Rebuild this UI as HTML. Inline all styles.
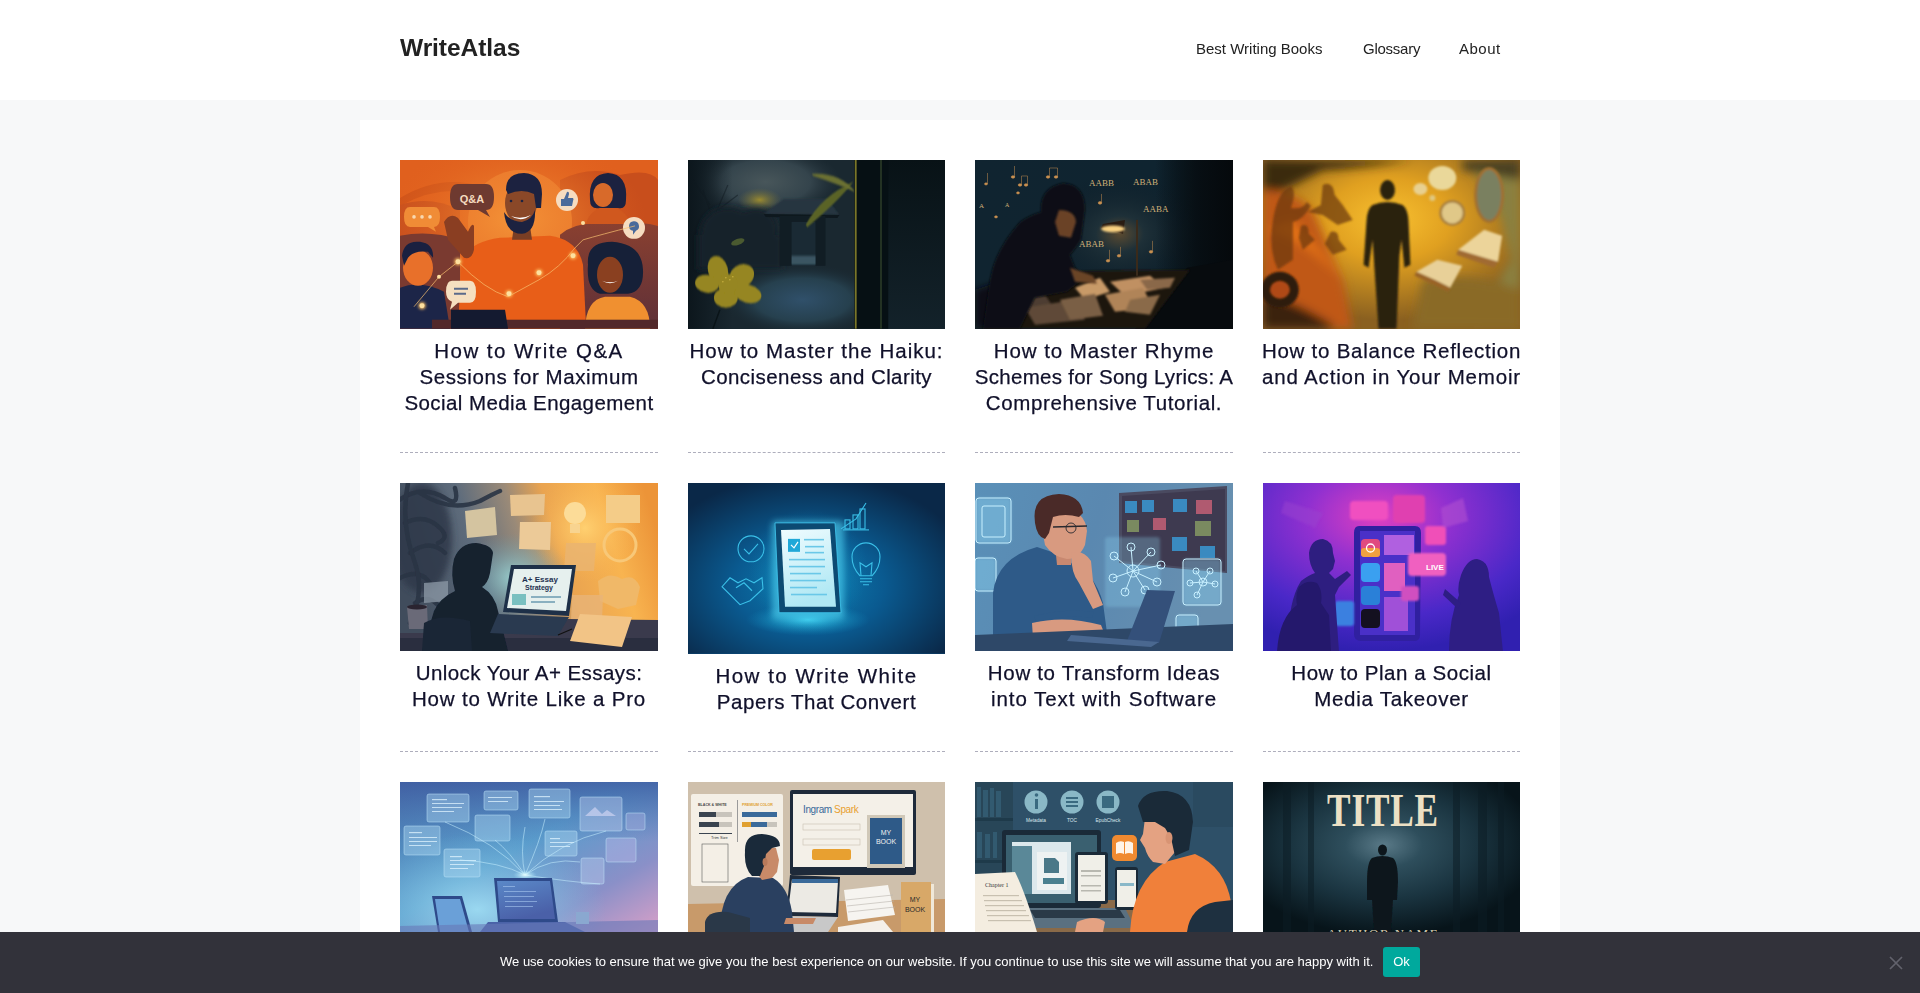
<!DOCTYPE html>
<html><head><meta charset="utf-8">
<style>
*{box-sizing:border-box;margin:0;padding:0}
html,body{width:1920px;height:993px;overflow:hidden}
body{background:#f7f8f9;font-family:"Liberation Sans",sans-serif;color:#222;position:relative;-webkit-font-smoothing:antialiased}
.hdr{position:absolute;left:0;top:0;width:1920px;height:100px;background:#fff}
.logo{will-change:transform;position:absolute;left:400px;top:33.3px;font-size:24.5px;font-weight:bold;color:#222;letter-spacing:-0.05px;line-height:30px}
.nav{will-change:transform;position:absolute;top:40px;font-size:15px;color:#222;line-height:18px;white-space:nowrap}
.wrap{position:absolute;left:360px;top:120px;width:1200px;height:900px;background:#fff}
.card{position:absolute;width:257.5px}
.img{position:absolute;left:0;top:0;width:100%;overflow:hidden}
.img svg{display:block;width:100%;height:100%}
.t{will-change:transform;-webkit-text-stroke:0.25px #10102a;position:absolute;left:-10px;right:-10px;text-align:center;font-size:20.5px;line-height:26px;color:#10102a;white-space:nowrap}
.dash{position:absolute;left:0;width:258px;height:0;border-top:1px dashed #aeaebc}
.cookie{position:absolute;left:0;top:932px;width:1920px;height:61px;background:#32323a}
.ctext{will-change:transform;position:absolute;left:500px;top:22px;font-size:13px;line-height:16px;color:#fff;white-space:nowrap}
.ok{will-change:transform;position:absolute;left:1383px;top:15px;width:37px;height:30px;background:#00a99d;color:#fff;font-size:13px;line-height:30px;text-align:center;border-radius:3px}
.x{position:absolute;left:1889px;top:24px;width:14px;height:14px}
</style></head><body>
<div class="hdr">
  <div class="logo">WriteAtlas</div>
  <div class="nav" style="left:1196px">Best Writing Books</div>
  <div class="nav" style="left:1363px;letter-spacing:-0.25px">Glossary</div>
  <div class="nav" style="left:1459px;letter-spacing:0.5px">About</div>
</div>
<div class="wrap"></div>

<!-- row 1 -->
<div class="card" style="left:400px;width:258px;top:160px">
  <div class="img" id="im1" style="height:168.7px;background:#d9581c"><svg viewBox="0 0 258 169" preserveAspectRatio="none">
<defs>
<radialGradient id="g1a" cx="0.45" cy="0.35" r="0.5"><stop offset="0" stop-color="#f49438"/><stop offset="1" stop-color="#e2621e" stop-opacity="0"/></radialGradient>
<linearGradient id="g1b" x1="0" y1="0" x2="0" y2="1"><stop offset="0" stop-color="#8a4030"/><stop offset="1" stop-color="#5e3038"/></linearGradient>
<filter id="gl1" x="-100%" y="-100%" width="300%" height="300%"><feGaussianBlur stdDeviation="1.5"/></filter>
</defs>
<rect width="258" height="169" fill="#e0601e"/>
<path d="M0 38 Q40 14 80 26 L80 34 Q40 24 0 46Z" fill="#d0541a"/>
<path d="M0 45 Q30 35 60 50 L60 80 L0 80Z" fill="#c8501e"/>
<path d="M160 20 Q190 5 220 15 Q250 8 258 20 L258 80 L160 80Z" fill="#c84e1c"/>
<circle cx="120" cy="62" r="52" fill="#ee8232"/>
<rect width="258" height="169" fill="url(#g1a)"/>
<path d="M0 76 Q30 70 60 80 L60 169 L0 169Z" fill="#7a3a30"/>
<path d="M160 75 Q175 62 200 64 Q235 60 258 66 L258 169 L160 169Z" fill="url(#g1b)"/>

<!-- Q&A bubble -->
<path d="M58 24 H86 Q94 24 94 37 Q94 50 86 50 L90 57 L78 50 H58 Q50 50 50 37 Q50 24 58 24Z" fill="#6e3a30"/>
<text x="72" y="43" font-family="Liberation Sans" font-weight="bold" font-size="11" fill="#f5dcc0" text-anchor="middle">Q&amp;A</text>
<!-- dots bubble -->
<path d="M10 47 H34 Q40 47 40 57 Q40 67 34 67 L36 72 L28 67 H10 Q4 67 4 57 Q4 47 10 47Z" fill="#f08c36"/>
<circle cx="14" cy="57" r="1.8" fill="#f8d8b0"/><circle cx="22" cy="57" r="1.8" fill="#f8d8b0"/><circle cx="30" cy="57" r="1.8" fill="#f8d8b0"/>
<!-- man sweater -->
<path d="M62 100 Q70 82 100 78 L150 76 Q178 80 183 105 L186 165 L58 165Z" fill="#e85e18"/>
<!-- hand -->
<path d="M44 62 Q50 52 58 58 L68 72 Q72 62 74 66 L74 90 Q72 100 64 98 L48 80Z" fill="#8a3e22"/>
<!-- man head -->
<path d="M114 66 L130 66 L132 80 L112 80Z" fill="#7a3e24"/>
<ellipse cx="121" cy="43" rx="16" ry="21" fill="#8a4828"/>
<path d="M106 30 Q106 13 124 13 Q142 14 142 34 L141 48 L136 48 L134 34 Q122 28 108 34Z" fill="#1c2240"/>
<path d="M104 52 Q106 74 122 74 Q136 72 135 50 Q132 60 122 62 Q110 62 104 52Z" fill="#1c2240"/>
<path d="M111 56 Q121 63 131 55 Q121 60 111 56Z" fill="#fff"/>
<circle cx="111" cy="41" r="1.3" fill="#1c2240"/><circle cx="122" cy="41" r="1.3" fill="#1c2240"/>
<!-- boy -->
<path d="M0 128 Q20 120 44 132 L50 169 L0 169Z" fill="#1c2548"/>
<ellipse cx="18" cy="108" rx="15" ry="18" fill="#e8702a"/>
<path d="M2 96 Q4 80 20 82 Q34 84 33 98 L28 92 Q14 90 8 98 L4 106Z" fill="#1a2040"/>
<!-- chat bubble cream -->
<path d="M52 121 H70 Q76 121 76 132 Q76 143 70 143 H58 L50 150 L52 142 Q46 140 46 132 Q46 121 52 121Z" fill="#f5dfc0"/>
<rect x="54" y="128" width="14" height="2" fill="#5a6a8a"/><rect x="54" y="133" width="12" height="2" fill="#5a6a8a"/>
<!-- thumbs circle -->
<circle cx="167" cy="40" r="11" fill="#f6dcc0"/>
<path d="M161 39 L164 39 L167 32 Q169 31 169 34 L168 38 L173 38 Q174 39 173 41 L172 46 L161 46Z" fill="#4a6a9a"/>
<!-- top-right woman -->
<path d="M186 64 Q190 48 208 47 Q226 48 230 64Z" fill="#d0581e"/>
<path d="M190 40 Q188 14 208 13 Q228 14 226 40 Q226 50 218 48 L200 48 Q190 50 190 40Z" fill="#1c2240"/>
<ellipse cx="203" cy="35" rx="10" ry="12" fill="#d86a2a"/>
<!-- chat circle -->
<circle cx="234" cy="68" r="11" fill="#f6dcc0"/>
<path d="M229 66 A5 5 0 1 1 236 71 L233 75 L233 71 A5 5 0 0 1 229 66Z" fill="#4a6a9a"/>
<!-- woman bottom right -->
<path d="M185 169 Q186 140 205 137 L230 137 Q250 142 250 169Z" fill="#f09030"/>
<path d="M188 105 Q186 82 212 82 Q242 84 243 110 Q244 132 228 134 L200 134 Q186 130 188 105Z" fill="#162038"/>
<ellipse cx="210" cy="115" rx="13" ry="18" fill="#8a4020"/>
<path d="M202 121 Q210 126 218 121 Q210 124 202 121Z" fill="#fff"/>
<!-- laptop and desk -->
<rect x="32" y="160" width="226" height="9" fill="#52282a"/>
<path d="M51 150 L105 150 L108 169 L51 169Z" fill="#141a30"/>
<!-- network lines -->
<path d="M14 147 L39 117 L58 102 Q85 130 108 137 L139 120 Q160 108 175 88 L183 80 Q200 75 235 66" stroke="#f8c070" stroke-width="0.7" fill="none"/>
<g filter="url(#gl1)"><circle cx="58" cy="102" r="3.5" fill="#ffc060"/><circle cx="109" cy="134" r="3.5" fill="#ffc060"/><circle cx="139" cy="113" r="3.5" fill="#ffc060"/><circle cx="173" cy="96" r="3.5" fill="#ffc060"/><circle cx="22" cy="146" r="3.5" fill="#ffc060"/></g><circle cx="58" cy="102" r="2.5" fill="#fde0a0"/><circle cx="39" cy="117" r="2" fill="#fde0a0"/><circle cx="22" cy="146" r="2.5" fill="#fde0a0"/>
<circle cx="109" cy="134" r="2.5" fill="#fde0a0"/><circle cx="139" cy="113" r="2.5" fill="#fde0a0"/><circle cx="173" cy="96" r="2.5" fill="#fde0a0"/><circle cx="183" cy="63" r="2" fill="#fde0a0"/>
</svg></div><!--e1-->
  <div class="t" style="top:177.9px"><div style="letter-spacing:1.467px">How to Write Q&amp;A</div><div style="letter-spacing:0.595px">Sessions for Maximum</div><div style="letter-spacing:0.427px">Social Media Engagement</div></div>
</div>
<div class="card" style="left:688px;width:257px;top:160px">
  <div class="img" id="im2" style="height:168.7px;background:#1a2a33"><svg viewBox="0 0 258 169" preserveAspectRatio="none">
<defs>
<radialGradient id="g2sky" cx="0.5" cy="0.5" r="0.5"><stop offset="0" stop-color="#48565a"/><stop offset="0.6" stop-color="#34444c"/><stop offset="1" stop-color="#26343c" stop-opacity="0"/></radialGradient>
<radialGradient id="g2y" cx="0.5" cy="0.5" r="0.5"><stop offset="0" stop-color="#9a8a30"/><stop offset="1" stop-color="#6a6a40" stop-opacity="0"/></radialGradient>
<radialGradient id="g2gr" cx="0.5" cy="0.5" r="0.5"><stop offset="0" stop-color="#30506a"/><stop offset="0.6" stop-color="#26404e"/><stop offset="1" stop-color="#1a2a34" stop-opacity="0"/></radialGradient>
<linearGradient id="g2r" x1="0" y1="0" x2="0" y2="1"><stop offset="0" stop-color="#081216"/><stop offset="1" stop-color="#13222a"/></linearGradient>
<linearGradient id="g2l" x1="0" y1="0" x2="1" y2="0"><stop offset="0" stop-color="#0c161c"/><stop offset="1" stop-color="#0c161c" stop-opacity="0"/></linearGradient>
<filter id="b2" x="-20%" y="-20%" width="140%" height="140%"><feGaussianBlur stdDeviation="3"/></filter>
<filter id="b2s"><feGaussianBlur stdDeviation="0.8"/></filter>
</defs>
<rect width="258" height="169" fill="#1a2830"/>
<ellipse cx="78" cy="22" rx="75" ry="36" fill="url(#g2sky)"/>
<ellipse cx="72" cy="40" rx="22" ry="12" fill="url(#g2y)"/>
<rect x="0" y="0" width="45" height="169" fill="url(#g2l)"/>
<g stroke="#101a20" stroke-width="1.2" fill="none" opacity="0.5"><path d="M20 110 L25 60 L15 30 M25 60 L40 25 M22 45 L5 20 M30 50 L50 35"/></g>
<g fill="#15232b" filter="url(#b2)"><ellipse cx="40" cy="75" rx="28" ry="28"/><ellipse cx="68" cy="70" rx="22" ry="22"/><rect x="10" y="75" width="85" height="35"/></g>
<ellipse cx="115" cy="140" rx="80" ry="36" fill="url(#g2gr)"/>
<path d="M76 54 L96 39 L140 39 L152 55Z" fill="#26363f" filter="url(#b2s)"/><path d="M76 54 L152 55 L150 58 L78 57Z" fill="#0e181e"/>
<rect x="92" y="56" width="46" height="50" fill="#111d24"/>
<rect x="104" y="62" width="24" height="42" fill="#1a2a34"/>
<rect x="104" y="96" width="24" height="9" fill="#3a5462" filter="url(#b2s)"/>
<path d="M118 65 Q135 35 166 22 Q150 42 120 67Z" fill="#5a6428" filter="url(#b2s)"/>
<path d="M124 14 Q152 12 168 32 Q150 24 126 16Z" fill="#6a7030" filter="url(#b2s)"/>
<rect x="200" y="0" width="58" height="169" fill="url(#g2r)"/>
<rect x="167" y="0" width="34" height="169" fill="#061014"/>
<rect x="167.5" y="0" width="1.8" height="169" fill="#7a7628"/>
<rect x="193" y="0" width="1.5" height="169" fill="#2e3e28"/>
<g filter="url(#b2s)" fill="#968620">
<ellipse cx="30" cy="110" rx="10" ry="14" transform="rotate(-15 30 110)"/>
<ellipse cx="54" cy="116" rx="13" ry="11" transform="rotate(-35 54 116)"/>
<ellipse cx="19" cy="124" rx="12" ry="9" transform="rotate(10 19 124)"/>
<ellipse cx="38" cy="138" rx="12" ry="10"/>
<ellipse cx="60" cy="134" rx="14" ry="9" transform="rotate(15 60 134)"/>
<circle cx="40" cy="124" r="10"/>
</g>
<g fill="#c8b040"><circle cx="38" cy="118" r="0.8"/><circle cx="42" cy="120" r="0.8"/><circle cx="35" cy="122" r="0.8"/><circle cx="45" cy="117" r="0.8"/></g>
<path d="M32 150 L25 169" stroke="#0a1418" stroke-width="1.5"/>
<ellipse cx="50" cy="82" rx="7" ry="3" fill="#4a5a30" transform="rotate(-20 50 82)"/>
</svg></div><!--e2-->
  <div class="t" style="top:177.9px"><div style="letter-spacing:1.0px">How to Master the Haiku:</div><div style="letter-spacing:0.436px">Conciseness and Clarity</div></div>
</div>
<div class="card" style="left:975px;width:258px;top:160px">
  <div class="img" id="im3" style="height:168.7px;background:#121c24"><svg viewBox="0 0 258 169" preserveAspectRatio="none">
<defs>
<radialGradient id="g3l" cx="0.53" cy="0.45" r="0.5"><stop offset="0" stop-color="#5a4a30"/><stop offset="0.3" stop-color="#1e3038"/><stop offset="1" stop-color="#0e1c26" stop-opacity="0"/></radialGradient>
<radialGradient id="g3p" cx="0.55" cy="0.2" r="0.7"><stop offset="0" stop-color="#d8a060"/><stop offset="0.5" stop-color="#9a7048"/><stop offset="1" stop-color="#4a3828"/></radialGradient>
<linearGradient id="g3bg" x1="0" y1="0" x2="1" y2="0"><stop offset="0" stop-color="#102430"/><stop offset="0.7" stop-color="#0f2430"/><stop offset="1" stop-color="#070f14"/></linearGradient>
<linearGradient id="g3rr" x1="0" y1="0" x2="1" y2="0"><stop offset="0.7" stop-color="#060c10" stop-opacity="0"/><stop offset="0.88" stop-color="#060c10" stop-opacity="0.85"/><stop offset="1" stop-color="#05090c"/></linearGradient>
<filter id="b3" x="-20%" y="-20%" width="140%" height="140%"><feGaussianBlur stdDeviation="3"/></filter>
<filter id="b3s"><feGaussianBlur stdDeviation="0.8"/></filter>
</defs>
<rect width="258" height="169" fill="url(#g3bg)"/>
<rect x="60" y="20" width="160" height="120" fill="url(#g3l)"/>
<path d="M0 130 L30 120 L20 169 L0 169Z" fill="#0a1014" filter="url(#b3)"/><rect width="258" height="169" fill="url(#g3rr)"/><path d="M160 169 L212 108 L258 100 L258 169Z" fill="#070b0e"/>
<!-- desk -->
<path d="M15 150 L40 112 L215 110 L170 169 L10 169Z" fill="#1e150e" filter="url(#b3s)"/>
<g filter="url(#b3s)">
<path d="M100 128 L125 118 L135 132 L110 140Z" fill="#c89a68"/>
<path d="M135 122 L175 116 L190 128 L150 136Z" fill="#c09062"/>
<path d="M130 135 L168 128 L178 148 L140 152Z" fill="#b08458"/>
<path d="M18 142 L70 135 L80 150 L28 156Z" fill="#4e3e30"/>
<path d="M50 148 L100 140 L110 160 L60 165Z" fill="#5e4a38"/>
<path d="M85 140 L120 134 L128 156 L95 160Z" fill="#7a5e44"/>
<path d="M165 120 L200 118 L195 128 L172 130Z" fill="#8a6848"/>
<path d="M155 140 L185 135 L175 155 L150 152Z" fill="#8a6a48"/>
</g>
<!-- person -->
<path d="M8 169 L15 120 Q20 90 45 62 Q55 55 66 52 Q64 28 88 23 Q110 24 110 50 L106 80 Q100 90 95 95 L100 108 L110 118 L92 132 L60 138 L45 169Z" fill="#0a0e12" filter="url(#b3s)"/>
<path d="M84 50 Q100 50 101 62 L96 78 L84 76 L80 62Z" fill="#6a4226" filter="url(#b3s)"/>
<path d="M95 108 L118 116 L122 124 L100 122Z" fill="#6a4428" filter="url(#b3s)"/>
<!-- lamp -->
<path d="M128 64 L150 60 L148 74 L126 68Z" fill="#2a1c12"/>
<ellipse cx="138" cy="69" rx="12" ry="3.5" fill="#f8d080" filter="url(#b3s)"/>
<rect x="161" y="60" width="2" height="56" fill="#3a2a1a"/>
<!-- text -->
<g font-family="Liberation Serif" fill="#d0b078" font-size="9">
<text x="114" y="26">AABB</text><text x="158" y="25">ABAB</text><text x="168" y="52">AABA</text><text x="104" y="87">ABAB</text>
<text x="4" y="48" font-size="7">A</text><text x="30" y="47" font-size="6">A</text>
</g>
<g fill="#c89050" stroke="#c89050" stroke-width="0.5">
<ellipse cx="38" cy="17" rx="1.8" ry="1.3"/><path d="M39.5 17 V6" fill="none"/>
<ellipse cx="45" cy="25" rx="1.8" ry="1.3"/><ellipse cx="51" cy="25" rx="1.8" ry="1.3"/><path d="M46.5 25 V16 H52.5 V25" fill="none"/>
<ellipse cx="73" cy="17" rx="1.8" ry="1.3"/><ellipse cx="81" cy="17" rx="1.8" ry="1.3"/><path d="M74.5 17 V8 H82.5 V17" fill="none"/>
<ellipse cx="11" cy="24" rx="1.5" ry="1.1"/><path d="M12.5 24 V13" fill="none"/>
<ellipse cx="125" cy="43" rx="1.8" ry="1.3"/><path d="M126.5 43 V34" fill="none"/>
<ellipse cx="133" cy="101" rx="1.8" ry="1.3"/><ellipse cx="144" cy="96" rx="1.8" ry="1.3"/><path d="M134.5 101 V90 M145.5 96 V87" fill="none"/>
<ellipse cx="176" cy="92" rx="1.8" ry="1.3"/><path d="M177.5 92 V81" fill="none"/>
<ellipse cx="21" cy="57" rx="1.5" ry="1.1"/><ellipse cx="43" cy="33" rx="1.5" ry="1.1"/>
</g>
</svg></div><!--e3-->
  <div class="t" style="top:177.9px"><div style="letter-spacing:0.933px">How to Master Rhyme</div><div style="letter-spacing:0.28px">Schemes for Song Lyrics: A</div><div style="letter-spacing:0.614px">Comprehensive Tutorial.</div></div>
</div>
<div class="card" style="left:1263px;width:257px;top:160px">
  <div class="img" id="im4" style="height:168.7px;background:#8a6a20"><svg viewBox="0 0 258 169" preserveAspectRatio="none">
<defs>
<radialGradient id="g4c" cx="0.49" cy="0.35" r="0.6"><stop offset="0" stop-color="#f8c030"/><stop offset="0.4" stop-color="#e0a020"/><stop offset="1" stop-color="#8a6020"/></radialGradient>
<filter id="b4" x="-30%" y="-30%" width="160%" height="160%"><feGaussianBlur stdDeviation="5"/></filter>
<filter id="b4s"><feGaussianBlur stdDeviation="1"/></filter>
</defs>
<rect width="258" height="169" fill="url(#g4c)"/>
<g filter="url(#b4)">
<path d="M0 0 L150 0 Q100 8 60 10 L30 25 L0 40Z" fill="#3a2c10"/>
<path d="M0 30 Q30 30 50 50 L80 120 L90 169 L0 169Z" fill="#c05818"/>
<path d="M205 0 L258 0 L258 169 L215 169 Q235 120 250 100 L240 60Z" fill="#8a8040"/>
<path d="M160 120 Q210 110 258 130 L258 169 L150 169Z" fill="#8a6a28"/>
<path d="M0 135 Q30 140 70 165 L70 169 L0 169Z" fill="#3a2008"/><path d="M5 70 Q40 80 80 120 Q60 90 30 60Z" fill="#e07018"/>
<path d="M200 0 L258 0 L258 20 L200 10Z" fill="#4a4020"/>
</g>
<g filter="url(#b4s)" fill="#6a3810" opacity="0.7">
<path d="M10 60 Q15 30 28 26 Q34 32 28 48 Q40 50 44 42 L48 46 Q40 60 30 62 L30 100 L15 110 Q5 90 10 60Z"/>
<path d="M60 25 Q70 20 72 35 L80 45 L90 60 L75 65 L60 55 L45 52 L58 45Z"/>
<path d="M38 66 Q46 62 46 74 L52 80 L40 90 L36 78Z"/>
<path d="M68 72 Q76 70 76 80 L84 90 L70 95 L62 84Z"/>
</g>
<ellipse cx="17" cy="130" rx="19" ry="18" fill="#2e1c0a" filter="url(#b4s)"/>
<ellipse cx="17" cy="130" rx="10" ry="9" fill="#b04a12" filter="url(#b4s)"/>
<!-- man -->
<g fill="#2a220e" filter="url(#b4s)">
<ellipse cx="125" cy="30" rx="7.5" ry="10"/>
<path d="M110 45 Q125 39 140 45 Q145 48 146 60 L148 105 L142 108 L139 80 L137 96 L134 169 L116 169 L111 96 L110 80 L106 108 L101 105 L104 60 Q105 48 110 45Z"/>
</g>
<!-- thought bubbles -->
<g filter="url(#b4s)">
<ellipse cx="180" cy="18" rx="14" ry="12" fill="#ead89a"/>
<ellipse cx="158" cy="29" rx="7" ry="6" fill="#e8d090"/>
<circle cx="170" cy="38" r="3" fill="#e0c880"/>
<circle cx="190" cy="53" r="13" fill="#a88040"/>
<circle cx="190" cy="53" r="10.5" fill="#e0c888"/>
<ellipse cx="227" cy="35" rx="15" ry="28" fill="#a07030"/>
<ellipse cx="227" cy="35" rx="12" ry="25" fill="#7a8060"/>
<path d="M196 90 L222 70 L240 76 L236 102 L212 98 Z" fill="#ecd49a"/>
<path d="M196 90 L236 102 L232 108 L194 95Z" fill="#a06a30"/>
<path d="M154 112 L175 100 L200 106 L188 128 L172 120Z" fill="#e8d098"/>
<path d="M154 112 L172 120 L188 128 L186 132 L152 116Z" fill="#9a6428"/>
</g>
</svg></div><!--e4-->
  <div class="t" style="top:177.9px"><div style="letter-spacing:0.75px">How to Balance Reflection</div><div style="letter-spacing:0.833px">and Action in Your Memoir</div></div>
</div>

<!-- row 2 -->
<div class="card" style="left:400px;width:258px;top:483px">
  <div class="img" id="im5" style="height:168px;background:#6a6070"><svg viewBox="0 0 258 168" preserveAspectRatio="none">
<defs>
<linearGradient id="g5bg" x1="0" y1="0.5" x2="1" y2="0.3"><stop offset="0" stop-color="#404c5c"/><stop offset="0.3" stop-color="#5e6c7c"/><stop offset="0.48" stop-color="#9a8a78"/><stop offset="0.62" stop-color="#eaa450"/><stop offset="0.82" stop-color="#f8b450"/><stop offset="1" stop-color="#ec9438"/></linearGradient>
<radialGradient id="g5glow" cx="0.5" cy="0.5" r="0.5"><stop offset="0" stop-color="#9ad0d0"/><stop offset="1" stop-color="#6a98a8" stop-opacity="0"/></radialGradient>
<radialGradient id="g5o" cx="0.5" cy="0.5" r="0.5"><stop offset="0" stop-color="#ffd070"/><stop offset="1" stop-color="#f8b050" stop-opacity="0"/></radialGradient>
<filter id="b5" x="-30%" y="-30%" width="160%" height="160%"><feGaussianBlur stdDeviation="3"/></filter>
<filter id="b5s"><feGaussianBlur stdDeviation="0.6"/></filter>
</defs>
<rect width="258" height="168" fill="url(#g5bg)"/>
<rect x="60" y="50" width="110" height="90" fill="url(#g5glow)"/>
<rect x="130" y="-10" width="110" height="110" fill="url(#g5o)"/>
<ellipse cx="22" cy="55" rx="30" ry="55" fill="#2e3848" filter="url(#b5)" opacity="0.85"/>
<g fill="none" stroke="#2a3444" stroke-width="4.5" stroke-linecap="round" filter="url(#b5s)" opacity="0.9">
<path d="M-5 20 Q20 0 45 15 Q60 25 55 5 M20 10 Q50 30 80 18 Q95 10 100 8"/>
<path d="M5 40 Q25 30 40 45 Q50 55 38 60 M10 70 Q30 55 45 70 M0 95 Q20 85 30 100 M15 120 Q30 110 40 125"/>
<path d="M8 0 Q0 40 15 80 Q25 110 10 140"/>
</g>
<!-- notes -->
<g filter="url(#b5s)">
<path d="M65 28 L95 24 L97 52 L67 55Z" fill="#d4c4a0"/>
<path d="M110 12 L145 11 L144 32 L111 33Z" fill="#e8c490"/>
<path d="M120 39 L151 39 L150 67 L119 66Z" fill="#ecca98"/>
<circle cx="175" cy="30" r="11" fill="#fcdc98"/><rect x="170" y="41" width="10" height="9" fill="#f8d490"/>
<path d="M206 12 L240 12 L240 40 L206 40Z" fill="#f4cc88"/>
<circle cx="220" cy="62" r="16" fill="none" stroke="#f8c878" stroke-width="3"/>
<path d="M166 60 L196 60 L194 88 L164 88Z" fill="#eab470" opacity="0.85"/>
<path d="M198 98 Q210 88 222 96 Q234 90 240 104 L236 122 L218 126 L200 118Z" fill="#f0b868"/>
<path d="M172 112 L203 112 L202 138 L171 138Z" fill="#e8b478" opacity="0.8"/>
<path d="M24 100 L48 98 L48 118 L24 120Z" fill="#8a96a4" opacity="0.8"/>
</g>
<!-- desk -->
<path d="M0 150 L100 150 L168 136 L258 137 L258 168 L0 168Z" fill="#3a3a4c"/>
<path d="M0 155 L258 155 L258 168 L0 168Z" fill="#242a3a" opacity="0.7"/>
<path d="M180 131 L232 134 L222 164 L170 158Z" fill="#f2c486"/>
<!-- mug -->
<path d="M7 124 L27 122 L28 146 L9 146Z" fill="#6a6a78"/>
<ellipse cx="17" cy="124" rx="10" ry="2.5" fill="#2a2430"/>
<!-- person -->
<path d="M22 168 L34 128 Q40 115 55 108 Q50 92 54 76 Q60 60 76 60 Q92 62 93 70 L90 90 Q88 100 82 104 Q95 112 98 128 L108 168Z" fill="#14202e" filter="url(#b5s)"/>
<path d="M24 140 Q40 130 70 138 L72 168 L22 168Z" fill="#1a2636"/>
<!-- laptop -->
<path d="M111 82 L176 82 L169 133 L103 129Z" fill="#1e3048"/>
<path d="M114 86 L172 86 L166 128 L107 125Z" fill="#e6f0ee"/>
<text x="140" y="99" font-family="Liberation Sans" font-weight="bold" font-size="8" fill="#1e3050" text-anchor="middle">A+ Essay</text>
<text x="139" y="107" font-family="Liberation Sans" font-weight="bold" font-size="7" fill="#1e3050" text-anchor="middle">Strategy</text>
<rect x="112" y="111" width="14" height="11" fill="#7ac0c0"/>
<rect x="131" y="113" width="30" height="2" fill="#8ab0c0"/><rect x="131" y="118" width="24" height="2" fill="#8ab0c0"/>
<path d="M98 131 L169 134 L158 153 L90 150Z" fill="#2a3a50"/>
<path d="M158 152 L172 146" stroke="#111" stroke-width="1.2"/>
</svg></div><!--e5-->
  <div class="t" style="top:176.9px"><div style="letter-spacing:0.429px">Unlock Your A+ Essays:</div><div style="letter-spacing:0.836px">How to Write Like a Pro</div></div>
</div>
<div class="card" style="left:688px;width:257px;top:483px">
  <div class="img" id="im6" style="height:170.6px;background:#0a4a7a"><svg viewBox="0 0 257 171" preserveAspectRatio="none">
<defs>
<radialGradient id="g6bg" cx="0.47" cy="0.6" r="0.65"><stop offset="0" stop-color="#0c80b4"/><stop offset="0.45" stop-color="#0a5a90"/><stop offset="1" stop-color="#0a2848"/></radialGradient>
<radialGradient id="g6f" cx="0.5" cy="0.5" r="0.5"><stop offset="0" stop-color="#40d0f0"/><stop offset="1" stop-color="#1090c0" stop-opacity="0"/></radialGradient>
<linearGradient id="g6s" x1="0" y1="0" x2="0.3" y2="1"><stop offset="0" stop-color="#f0fcff"/><stop offset="1" stop-color="#b0e8f4"/></linearGradient>
<filter id="b6"><feGaussianBlur stdDeviation="3"/></filter>
</defs>
<rect width="257" height="171" fill="url(#g6bg)"/>
<ellipse cx="120" cy="137" rx="62" ry="16" fill="url(#g6f)"/>
<ellipse cx="120" cy="88" rx="60" ry="62" fill="url(#g6f)" opacity="0.45"/><rect x="84" y="38" width="72" height="98" rx="4" fill="#50d0f0" opacity="0.6" filter="url(#b6)"/>
<path d="M87 40 L147 40 L153 130 L91 130Z" fill="#0c4a72" stroke="#40c8f0" stroke-width="0.8"/>
<path d="M93 47 L142 46 L148 124 L97 124Z" fill="url(#g6s)"/>
<rect x="100" y="56" width="12" height="13" fill="#20a8d8"/>
<path d="M103 62 L106 65 L110 59" stroke="#fff" stroke-width="1.2" fill="none"/>
<g fill="#6ac8e8"><rect x="116" y="56" width="20" height="1.6"/><rect x="117" y="63" width="19" height="1.6"/><rect x="117" y="69" width="19" height="1.6"/>
<rect x="101" y="76" width="36" height="1.6"/><rect x="101" y="83" width="36" height="1.6"/><rect x="102" y="90" width="31" height="1.6"/><rect x="102" y="97" width="36" height="1.6"/><rect x="102" y="104" width="27" height="1.6"/><rect x="103" y="111" width="36" height="1.6"/></g>
<g stroke="#3ac0e8" stroke-width="1.1" fill="none">
<circle cx="63" cy="66" r="13"/><path d="M56 66 L61 71 L70 61"/>
<path d="M34 104 L42 95 L50 100 L58 96 L66 100 L74 95 L75 106 L62 118 L52 122 L44 114Z"/><path d="M48 105 L56 100 L64 108"/>
<path d="M153 46 L168 36 L178 20"/><path d="M155 47 L181 47"/><rect x="157" y="37" width="5" height="9"/><rect x="165" y="32" width="5" height="14"/><rect x="172" y="26" width="5" height="20"/>
<path d="M172 93 Q164 85 164 74 A14 14 0 1 1 192 74 Q192 85 184 93Z"/><path d="M172 96 H184 M172 99 H184 M175 102 H181 M173 93 L172 80 L178 84 L184 80 L183 93"/>
</g>
</svg></div><!--e6-->
  <div class="t" style="top:180.0px"><div style="letter-spacing:1.506px">How to Write White</div><div style="letter-spacing:0.556px">Papers That Convert</div></div>
</div>
<div class="card" style="left:975px;width:258px;top:483px">
  <div class="img" id="im7" style="height:168px;background:#4a7aa0"><svg viewBox="0 0 258 168" preserveAspectRatio="none">
<defs>
<linearGradient id="g7bg" x1="0" y1="0" x2="1" y2="0.2"><stop offset="0" stop-color="#5a90b8"/><stop offset="0.5" stop-color="#5a88b0"/><stop offset="1" stop-color="#6890b0"/></linearGradient>
<filter id="b7"><feGaussianBlur stdDeviation="1.5"/></filter>
</defs>
<rect width="258" height="168" fill="url(#g7bg)"/>
<!-- board -->
<path d="M144 10 L252 3 L252 90 L144 80Z" fill="#4a4a60"/>
<path d="M147 13 L250 6 L250 88 L147 78Z" fill="#3e3a50"/>
<rect x="150" y="18" width="12" height="12" fill="#3a8ac0"/><rect x="167" y="17" width="12" height="12" fill="#3a8ac0"/>
<rect x="198" y="16" width="14" height="13" fill="#3a8ac0"/><rect x="221" y="17" width="16" height="14" fill="#b05a70"/>
<rect x="152" y="37" width="12" height="12" fill="#7a8a60"/><rect x="178" y="35" width="13" height="12" fill="#b05a70"/>
<rect x="220" y="38" width="16" height="15" fill="#7a8a60"/><rect x="197" y="54" width="15" height="14" fill="#3a8ac0"/><rect x="225" y="63" width="15" height="12" fill="#3a8ac0"/>
<!-- holo panels -->
<g filter="url(#b7)">
<rect x="1" y="15" width="35" height="45" rx="3" fill="#8ad0f0" opacity="0.45"/>
<rect x="0" y="75" width="21" height="33" rx="3" fill="#8ad0f0" opacity="0.45"/>
<rect x="130" y="54" width="55" height="70" rx="3" fill="#8ad0f0" opacity="0.3"/>
<rect x="208" y="76" width="38" height="46" rx="3" fill="#8ad0f0" opacity="0.4"/>
<rect x="201" y="132" width="22" height="25" rx="3" fill="#8ad0f0" opacity="0.4"/>
</g>
<g stroke="#c8f0ff" stroke-width="1" fill="none">
<rect x="1" y="15" width="35" height="45" rx="3"/><rect x="0" y="75" width="21" height="33" rx="3"/><rect x="208" y="76" width="38" height="46" rx="3"/><rect x="201" y="132" width="22" height="25" rx="3"/>
<path d="M158 88 L139 73 M158 88 L156 64 M158 88 L176 69 M158 88 L186 82 M158 88 L182 99 M158 88 L170 107 M158 88 L150 109 M158 88 L138 95 M228 99 L221 88 M228 99 L235 88 M228 99 L240 101 M228 99 L215 100 M228 99 L222 112"/>
<rect x="7" y="23" width="23" height="31" rx="2"/>
<circle cx="158" cy="88" r="6"/><circle cx="139" cy="73" r="4"/><circle cx="156" cy="64" r="4"/><circle cx="176" cy="69" r="4"/><circle cx="186" cy="82" r="4"/><circle cx="182" cy="99" r="4"/><circle cx="170" cy="107" r="4"/><circle cx="150" cy="109" r="4"/><circle cx="138" cy="95" r="4"/>
<circle cx="228" cy="99" r="4"/><circle cx="221" cy="88" r="3"/><circle cx="235" cy="88" r="3"/><circle cx="240" cy="101" r="3"/><circle cx="215" cy="100" r="3"/><circle cx="222" cy="112" r="3"/>
</g>
<!-- man -->
<path d="M18 169 L18 110 Q22 75 62 64 L80 70 L96 80 Q120 90 128 120 L132 150 L100 160 L60 169Z" fill="#2e5a88"/>
<path d="M80 62 L96 62 L96 82 L82 82Z" fill="#c88870"/>
<path d="M66 40 Q66 26 86 25 Q110 27 112 48 L110 62 Q104 76 92 76 Q78 74 70 62Z" fill="#d89a80"/>
<path d="M60 40 Q56 12 84 11 Q106 12 108 30 L104 34 Q90 30 78 34 L74 50 L70 56 Q62 54 60 40Z" fill="#4a2a28"/>
<path d="M78 44 L112 43" stroke="#2a2a30" stroke-width="1.3"/>
<circle cx="96" cy="45" r="5" fill="none" stroke="#2a2a30" stroke-width="0.9"/>
<path d="M96 70 Q108 66 116 78 L118 98 L128 122 L118 126 L104 100 Q96 90 96 70Z" fill="#d89a80"/>
<path d="M57 140 Q90 132 126 142 L130 152 L100 156 L58 156Z" fill="#d89a80"/>
<path d="M60 136 Q90 128 118 132" stroke="#2e5a88" stroke-width="6" fill="none"/>
<!-- desk & laptop -->
<path d="M0 152 L258 141 L258 168 L0 168Z" fill="#2e4868"/>
<path d="M172 107 L200 108 L184 160 L152 158Z" fill="#34507a"/>
<path d="M96 152 L184 159 L176 164 L92 158Z" fill="#4a6890"/>
</svg></div><!--e7-->
  <div class="t" style="top:176.9px"><div style="letter-spacing:0.667px">How to Transform Ideas</div><div style="letter-spacing:0.923px">into Text with Software</div></div>
</div>
<div class="card" style="left:1263px;width:257px;top:483px">
  <div class="img" id="im8" style="height:168px;background:#5a20c0"><svg viewBox="0 0 257 168" preserveAspectRatio="none">
<defs>
<radialGradient id="g8bg" cx="0.45" cy="0.2" r="0.8"><stop offset="0" stop-color="#e040c0"/><stop offset="0.35" stop-color="#9030d0"/><stop offset="0.75" stop-color="#4a28c8"/><stop offset="1" stop-color="#3020b0"/></radialGradient>
<filter id="b8"><feGaussianBlur stdDeviation="1"/></filter>
</defs>
<rect width="257" height="168" fill="url(#g8bg)"/>
<!-- phone -->
<path d="M96 43 L152 43 Q158 43 158 50 L157 152 Q157 158 151 158 L98 158 Q91 158 91 151 L91 50 Q91 43 96 43Z" fill="#3020a0"/>
<path d="M97 48 L152 48 L152 152 L97 152Z" fill="#4a30c8"/>
<rect x="98" y="56" width="19" height="18" rx="4" fill="#e04a80"/><rect x="98" y="65" width="19" height="9" rx="3" fill="#f0a040"/><circle cx="107.5" cy="65" r="4" fill="none" stroke="#fff" stroke-width="1.3"/>
<rect x="98" y="80" width="19" height="19" rx="4" fill="#3aa0f0"/>
<rect x="98" y="103" width="19" height="19" rx="4" fill="#2a80d8"/>
<rect x="98" y="126" width="19" height="19" rx="4" fill="#141020"/>
<rect x="121" y="52" width="30" height="20" fill="#b060e0"/>
<rect x="121" y="80" width="21" height="28" fill="#e060c0"/>
<rect x="121" y="114" width="24" height="34" fill="#a050d8"/>
<!-- bubbles -->
<g filter="url(#b8)">
<rect x="87" y="18" width="38" height="19" rx="4" fill="#f050c0"/>
<rect x="130" y="12" width="32" height="28" rx="4" fill="#e040b0"/>
<rect x="162" y="43" width="21" height="19" rx="3" fill="#f050b8"/>
<rect x="145" y="70" width="38" height="23" rx="4" fill="#f060c0"/>
<rect x="138" y="103" width="18" height="15" rx="3" fill="#d050c0"/>
<rect x="72" y="118" width="19" height="25" rx="3" fill="#3a80e0"/>
<path d="M22 18 L60 30 L52 45 L18 30Z" fill="#9a40d0" opacity="0.5"/>
<path d="M178 25 L200 15 L205 38 L180 45Z" fill="#b050d0" opacity="0.6"/>
</g>
<text x="163" y="87" font-family="Liberation Sans" font-weight="bold" font-size="8" fill="#fff">LIVE</text>
<!-- silhouettes -->
<path d="M25 169 Q24 120 38 98 Q46 92 52 90 Q46 82 46 70 Q48 56 60 56 Q70 58 70 70 L72 78 L70 86 L66 90 L72 96 L84 88 L88 92 L76 104 L72 112 L76 169Z" fill="#2e1e80"/>
<path d="M14 169 Q16 135 34 122 Q32 112 36 104 Q44 96 54 100 Q60 108 58 120 L66 132 L68 169Z" fill="#24186c"/>
<path d="M186 169 Q186 135 196 112 Q194 104 198 92 Q204 76 214 76 Q226 78 226 94 Q230 110 236 130 L240 169Z" fill="#2e1e84"/>
<path d="M182 106 L198 120 L195 126 L180 112Z" fill="#2e1e84"/>
</svg></div><!--e8-->
  <div class="t" style="top:176.9px"><div style="letter-spacing:0.563px">How to Plan a Social</div><div style="letter-spacing:0.738px">Media Takeover</div></div>
</div>

<!-- dashes -->
<div class="dash" style="left:400px;width:258px;top:452px"></div>
<div class="dash" style="left:688px;width:257px;top:452px"></div>
<div class="dash" style="left:975px;width:258px;top:452px"></div>
<div class="dash" style="left:1263px;width:257px;top:452px"></div>
<div class="dash" style="left:400px;width:258px;top:751px"></div>
<div class="dash" style="left:688px;width:257px;top:751px"></div>
<div class="dash" style="left:975px;width:258px;top:751px"></div>
<div class="dash" style="left:1263px;width:257px;top:751px"></div>

<!-- row 3 -->
<div class="card" style="left:400px;width:258px;top:782px">
  <div class="img" id="im9" style="height:150px;background:#5a8ac0"><svg viewBox="0 0 258 150" preserveAspectRatio="none">
<defs>
<linearGradient id="g9a" x1="0" y1="0" x2="1" y2="1"><stop offset="0" stop-color="#4a78b0"/><stop offset="0.45" stop-color="#5a9ccc"/><stop offset="0.75" stop-color="#8a90c8"/><stop offset="1" stop-color="#d8a0c8"/></linearGradient>
<linearGradient id="g9t" x1="0" y1="0" x2="0" y2="1"><stop offset="0" stop-color="#3e5aa0" stop-opacity="0.8"/><stop offset="0.4" stop-color="#4a70b0" stop-opacity="0"/></linearGradient>
<radialGradient id="g9g" cx="0.3" cy="0.85" r="0.5"><stop offset="0" stop-color="#9ad8f0"/><stop offset="1" stop-color="#7ac0e0" stop-opacity="0"/></radialGradient>
<radialGradient id="g9s" cx="0.5" cy="0.5" r="0.5"><stop offset="0" stop-color="#e8ffff"/><stop offset="1" stop-color="#a0e0f8" stop-opacity="0"/></radialGradient>
<linearGradient id="g9scr" x1="0" y1="0" x2="0.4" y2="1"><stop offset="0" stop-color="#5a88c8"/><stop offset="1" stop-color="#4a60a8"/></linearGradient>
</defs>
<rect width="258" height="150" fill="url(#g9a)"/>
<rect width="258" height="150" fill="url(#g9t)"/>
<rect width="258" height="150" fill="url(#g9g)"/>
<g fill="#a8d4f0" fill-opacity="0.45" stroke="#c0e4f8" stroke-opacity="0.7" stroke-width="0.7">
<rect x="27" y="12" width="42" height="28" rx="2"/><rect x="84" y="9" width="34" height="19" rx="2"/><rect x="129" y="7" width="41" height="29" rx="2"/>
<rect x="180" y="15" width="42" height="34" rx="2" fill="#b8c8ec"/><rect x="226" y="31" width="19" height="17" rx="2" fill="#a8b0e0"/>
<rect x="4" y="44" width="36" height="29" rx="2"/><rect x="75" y="33" width="35" height="26" rx="2"/><rect x="145" y="49" width="32" height="25" rx="2"/>
<rect x="206" y="56" width="30" height="24" rx="2" fill="#b8b8e8"/><rect x="44" y="67" width="36" height="28" rx="2"/><rect x="181" y="76" width="23" height="26" rx="2" fill="#b8c8ec"/>
</g>
<g fill="#e0f4ff" opacity="0.75">
<rect x="32" y="17" width="15" height="1.2"/><rect x="32" y="21" width="32" height="1"/><rect x="32" y="25" width="30" height="1"/><rect x="32" y="29" width="22" height="1"/>
<rect x="88" y="15" width="24" height="1"/><rect x="88" y="19" width="20" height="1"/>
<rect x="134" y="14" width="16" height="1.2"/><rect x="134" y="19" width="30" height="1"/><rect x="134" y="23" width="26" height="1"/><rect x="134" y="27" width="28" height="1"/>
<rect x="9" y="50" width="13" height="1.2"/><rect x="9" y="55" width="28" height="1"/><rect x="9" y="59" width="28" height="1"/><rect x="9" y="63" width="22" height="1"/>
<rect x="50" y="74" width="12" height="1.2"/><rect x="50" y="78" width="26" height="1"/><rect x="50" y="82" width="24" height="1"/><rect x="50" y="86" width="18" height="1"/>
<rect x="150" y="56" width="10" height="1.2"/><rect x="150" y="60" width="24" height="1"/><rect x="150" y="64" width="20" height="1"/>
<path d="M185 34 L195 25 L202 32 L207 28 L216 34Z" fill="#c8d0f0"/>
</g>
<g stroke="#c8f0ff" stroke-width="0.6" fill="none" opacity="0.9">
<path d="M125 93 Q110 70 95 58 M125 93 Q140 60 145 37 M125 93 Q150 75 180 80 M125 93 Q100 80 60 78 M125 93 Q120 70 125 45 M125 93 Q95 60 45 40 M125 93 Q160 60 206 49 M125 93 Q170 100 200 102"/>
</g>
<ellipse cx="125" cy="93" rx="12" ry="5" fill="url(#g9s)"/>
<!-- laptop -->
<path d="M94 96 L152 96 L158 140 L98 140Z" fill="#2e4a8a"/>
<path d="M97 99 L150 99 L155 137 L100 137Z" fill="url(#g9scr)"/>
<g fill="#a8c8f0" opacity="0.6"><rect x="103" y="104" width="12" height="1"/><rect x="104" y="109" width="32" height="1"/><rect x="104" y="114" width="30" height="1"/><rect x="105" y="119" width="32" height="1"/><rect x="105" y="124" width="28" height="1"/></g>
<path d="M88 140 L165 140 L185 150 L80 150Z" fill="#4a62a8"/>
<!-- tablet -->
<path d="M32 114 L62 114 L72 150 L38 150Z" fill="#2e4a8a"/>
<path d="M35 117 L60 117 L69 150 L40 150Z" fill="#6aa0d8"/>
<path d="M0 144 L258 138 L258 150 L0 150Z" fill="#6878b8" opacity="0.6"/>
<rect x="176" y="130" width="13" height="12" fill="#8aa8d0"/>
</svg></div><!--e9-->
</div>
<div class="card" style="left:688px;width:257px;top:782px">
  <div class="img" id="im10" style="height:150px;background:#d0c4b0"><svg viewBox="0 0 257 150" preserveAspectRatio="none">
<rect width="257" height="150" fill="#cfc0ac"/>
<rect x="3" y="12" width="92" height="92" rx="2" fill="#f4efe6"/>
<rect x="49" y="18" width="1" height="42" fill="#9a9a9a"/>
<text x="23" y="57" font-family="Liberation Sans" font-size="4" fill="#3a3a3a">Trim Size</text><text x="10" y="24" font-family="Liberation Sans" font-weight="bold" font-size="3.6" fill="#4a4a4a">BLACK &amp; WHITE</text>
<text x="54" y="24" font-family="Liberation Sans" font-weight="bold" font-size="3.6" fill="#e0a030">PREMIUM COLOR</text>
<rect x="11" y="30" width="17" height="5" fill="#3a4450"/><rect x="28" y="30" width="16" height="5" fill="#c8c4bc"/>
<rect x="11" y="40" width="20" height="5" fill="#3a4450"/><rect x="31" y="40" width="13" height="5" fill="#c8c4bc"/>
<rect x="54" y="30" width="35" height="5" fill="#3a6a9a"/>
<rect x="54" y="40" width="9" height="5" fill="#e0a030"/><rect x="63" y="40" width="16" height="5" fill="#3a6a9a"/><rect x="79" y="40" width="10" height="5" fill="#c8c4bc"/>
<rect x="11" y="51" width="33" height="1" fill="#3a4450"/>
<rect x="14" y="62" width="26" height="38" fill="none" stroke="#5a5a5a" stroke-width="0.6"/>
<!-- monitor -->
<rect x="102" y="8" width="126" height="85" rx="2" fill="#1e2a3a"/>
<rect x="105" y="12" width="120" height="73" fill="#f4f0e8"/>
<text x="115" y="31" font-family="Liberation Sans" font-size="10" fill="#3a6a9a" letter-spacing="-0.4">Ingram <tspan fill="#e8a030">Spark</tspan></text><text x="143.5" y="75" font-family="Liberation Sans" font-weight="bold" font-size="3.5" fill="#fff" text-anchor="middle">UPLOAD FILES</text>
<rect x="115" y="42" width="57" height="6" fill="none" stroke="#c8c0b0" stroke-width="0.6"/>
<rect x="115" y="57" width="57" height="6" fill="none" stroke="#c8c0b0" stroke-width="0.6"/>
<rect x="124" y="67" width="39" height="11" rx="2" fill="#e8a030"/>
<rect x="179" y="33" width="38" height="53" fill="#d0c8b8"/>
<rect x="182" y="36" width="32" height="46" fill="#2e5a88"/>
<text x="198" y="53" font-family="Liberation Sans" font-size="7" fill="#f0f0f0" text-anchor="middle">MY</text>
<text x="198" y="62" font-family="Liberation Sans" font-size="7" fill="#f0f0f0" text-anchor="middle">BOOK</text>
<!-- desk -->
<path d="M0 122 L257 117 L257 150 L0 150Z" fill="#c89a6a"/>
<!-- paper stack -->
<path d="M156 108 L200 103 L207 133 L160 139Z" fill="#f6f4f0"/>
<path d="M158 118 L205 113 M159 124 L206 119 M160 130 L207 125" stroke="#b8b4ac" stroke-width="0.6"/>
<path d="M150 145 L195 138 L205 150 L150 150Z" fill="#f4f0ea"/>
<!-- book -->
<rect x="213" y="100" width="30" height="50" fill="#d8a868"/>
<rect x="243" y="102" width="3" height="48" fill="#f0e8d8"/>
<text x="227" y="120" font-family="Liberation Sans" font-size="7" fill="#2a2a2a" text-anchor="middle">MY</text>
<text x="227" y="130" font-family="Liberation Sans" font-size="7" fill="#2a2a2a" text-anchor="middle">BOOK</text>
<!-- laptop -->
<path d="M102 93 L152 95 L150 135 L98 134Z" fill="#1e2a3a"/>
<path d="M104 97 L150 99 L148 131 L100 130Z" fill="#eceae4"/>
<rect x="104" y="97" width="46" height="4" fill="#3a6a9a"/>
<path d="M96 134 L150 135 L140 150 L92 150Z" fill="#c8c8c8"/>
<!-- man -->
<path d="M32 150 Q32 105 60 95 L85 96 Q100 105 104 130 L106 150Z" fill="#2a4060"/>
<path d="M72 64 L88 66 L91 78 L89 90 L84 96 L74 98 L68 90Z" fill="#c88a68"/>
<path d="M57 70 Q56 52 74 52 Q92 53 92 64 L84 66 L78 72 L76 84 L72 94 L64 94 Q56 86 57 70Z" fill="#1a2a3a"/><ellipse cx="77" cy="80" rx="2.5" ry="4" fill="#b87a5a"/>
<path d="M98 136 L128 136 L125 142 L96 142Z" fill="#c88a68"/>
<path d="M17 140 Q20 128 40 130 L62 136 L62 150 L17 150Z" fill="#2a3848"/>
</svg></div><!--e10-->
</div>
<div class="card" style="left:975px;width:258px;top:782px">
  <div class="img" id="im11" style="height:150px;background:#3a5a6a"><svg viewBox="0 0 258 150" preserveAspectRatio="none">
<rect width="258" height="150" fill="#2e5068"/>
<rect x="0" y="0" width="38" height="120" fill="#284658"/>
<g fill="#325a70"><rect x="2" y="5" width="4" height="30"/><rect x="8" y="8" width="5" height="27"/><rect x="15" y="6" width="4" height="29"/><rect x="21" y="9" width="5" height="26"/><rect x="2" y="50" width="5" height="26"/><rect x="10" y="52" width="5" height="24"/><rect x="18" y="50" width="4" height="26"/></g>
<rect x="0" y="36" width="38" height="3" fill="#1e3a4a"/><rect x="0" y="78" width="38" height="3" fill="#1e3a4a"/>
<rect x="218" y="0" width="40" height="45" fill="#2a4a60"/>
<g fill="#8ab8c6"><circle cx="61" cy="20" r="11.5"/><circle cx="97" cy="20" r="11.5"/><circle cx="133" cy="20" r="11.5"/></g>
<g fill="#3a6a80"><rect x="60" y="17" width="3" height="10"/><circle cx="61.5" cy="13" r="1.8"/><rect x="91" y="15" width="12" height="2"/><rect x="91" y="19" width="12" height="2"/><rect x="91" y="23" width="12" height="2"/><rect x="127" y="14" width="12" height="12"/></g>
<g font-family="Liberation Sans" font-size="4.8" fill="#d8e8ee" text-anchor="middle"><text x="61" y="40">Metadata</text><text x="97" y="40">TOC</text><text x="133" y="40">EpubCheck</text></g>
<!-- desk -->
<path d="M0 118 L170 118 L170 150 L0 150Z" fill="#8a6a48"/>
<!-- laptop -->
<rect x="27" y="48" width="99" height="78" rx="3" fill="#1a2a38"/>
<rect x="31" y="53" width="91" height="68" fill="#3a6070"/>
<rect x="37" y="60" width="59" height="52" fill="#dce8ec"/>
<rect x="37" y="64" width="20" height="48" fill="#5a8898"/>
<rect x="62" y="70" width="30" height="38" fill="#eef2f2"/>
<path d="M69 76 L80 76 L84 80 L84 91 L69 91Z" fill="#4a7888"/>
<rect x="68" y="96" width="21" height="6" fill="#4a8090"/>
<path d="M48 126 L150 126 L160 146 L58 146Z" fill="#5a7080"/>
<path d="M55 128 L145 128 L150 136 L60 136Z" fill="#2a3a48"/>
<!-- tablet -->
<rect x="100" y="70" width="33" height="52" rx="3" fill="#1a2a38"/>
<rect x="103" y="73" width="27" height="46" fill="#f0efe8"/>
<g fill="#b8b8b0"><rect x="106" y="88" width="20" height="2"/><rect x="106" y="93" width="20" height="1.5"/><rect x="106" y="103" width="20" height="1.5"/><rect x="106" y="108" width="20" height="1.5"/></g>
<!-- phone -->
<rect x="140" y="85" width="23" height="43" rx="3" fill="#1a2a38"/>
<rect x="142" y="88" width="19" height="37" fill="#f0efe8"/>
<rect x="145" y="101" width="14" height="3" fill="#8ab8c8"/>
<!-- books icon -->
<rect x="137" y="53" width="25" height="26" rx="5" fill="#f08a30"/>
<path d="M141 61 Q145 58 149 60 L149 72 Q145 70 141 72Z M150 60 Q154 58 158 61 L158 72 Q154 70 150 72Z" fill="#fff4e8"/>
<!-- paper -->
<path d="M0 92 L40 90 Q50 110 62 150 L0 150Z" fill="#f4ede0"/>
<text x="10" y="105" font-family="Liberation Serif" font-size="6" fill="#3a3a3a">Chapter 1</text>
<g fill="#c8c0b0"><rect x="8" y="113" width="36" height="1.2"/><rect x="9" y="118" width="38" height="1.2"/><rect x="10" y="123" width="39" height="1.2"/><rect x="11" y="128" width="40" height="1.2"/><rect x="12" y="133" width="42" height="1.2"/><rect x="13" y="138" width="43" height="1.2"/></g>
<!-- man -->
<path d="M155 150 Q158 100 190 80 L220 72 Q250 85 256 120 L258 150Z" fill="#f0803a"/>
<path d="M170 36 L196 36 L200 70 L190 82 L178 80 Q172 74 170 66 L165 58 L168 52Z" fill="#e4a282"/>
<path d="M163 24 Q168 8 192 9 Q217 12 218 40 L214 68 L200 74 L196 56 L190 46 L180 40 L168 40Z" fill="#1a2a38"/><ellipse cx="194" cy="56" rx="3.5" ry="6" fill="#d89474"/>
<path d="M212 150 Q215 125 240 120 L258 118 L258 150Z" fill="#1e3040"/>
<path d="M102 140 Q120 132 130 140 L128 150 L100 150Z" fill="#e4a282"/>
</svg></div><!--e11-->
</div>
<div class="card" style="left:1263px;width:257px;top:782px">
  <div class="img" id="im12" style="height:150px;background:#1a2a30"><svg viewBox="0 0 257 150" preserveAspectRatio="none">
<defs>
<radialGradient id="g12" cx="0.47" cy="0.42" r="0.6"><stop offset="0" stop-color="#5a7a88"/><stop offset="0.25" stop-color="#2e4e5c"/><stop offset="0.6" stop-color="#1a3440"/><stop offset="1" stop-color="#07141a"/></radialGradient>
<filter id="b12"><feGaussianBlur stdDeviation="0.6"/></filter>
</defs>
<rect width="257" height="150" fill="url(#g12)"/>
<g fill="#0c1c24" opacity="0.5"><rect x="20" y="0" width="8" height="150"/><rect x="45" y="0" width="6" height="150"/><rect x="190" y="0" width="7" height="150"/><rect x="215" y="0" width="9" height="150"/><rect x="235" y="0" width="6" height="150"/></g>
<text x="0" y="0" font-family="Liberation Serif" font-weight="bold" font-size="43" fill="#ece0c4" text-anchor="middle" letter-spacing="1" transform="translate(120 44) scale(0.82 1.08)">TITLE</text>
<g fill="#0c161c" filter="url(#b12)">
<ellipse cx="119.5" cy="68" rx="4.5" ry="5.5"/>
<path d="M109 76 Q119 72 130 76 Q135 80 135 100 L134 118 L130 118 L128 150 L111 150 L109 118 L104 118 L104 100 Q104 80 109 76Z"/>
</g>
<text x="120" y="156" font-family="Liberation Serif" font-size="13" fill="#d8ccb0" text-anchor="middle" letter-spacing="1.5">AUTHOR NAME</text>
</svg></div><!--e12-->
</div>

<div class="cookie">
  <div class="ctext">We use cookies to ensure that we give you the best experience on our website. If you continue to use this site we will assume that you are happy with it.</div>
  <div class="ok">Ok</div>
  <svg class="x" viewBox="0 0 14 14"><path d="M1 1L13 13M13 1L1 13" stroke="#62626c" stroke-width="1.7"/></svg>
</div>
</body></html>
